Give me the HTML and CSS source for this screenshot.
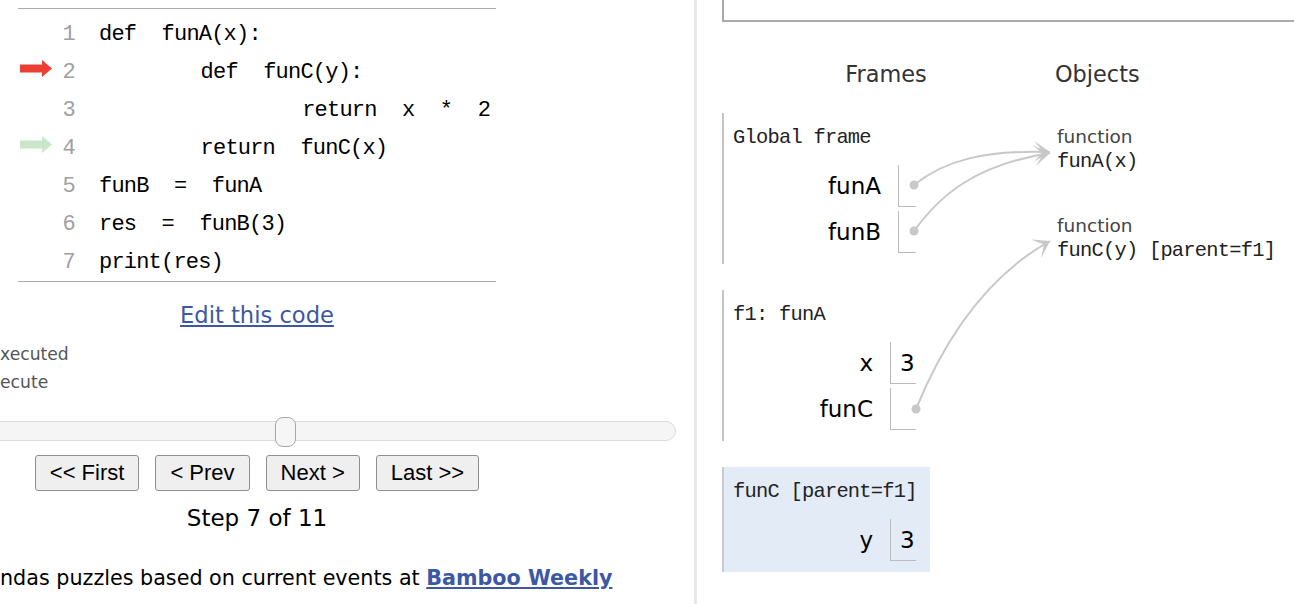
FILE: index.html
```html
<!DOCTYPE html>
<html lang="en">
<head>
<meta charset="utf-8">
<title>Python Tutor - Visualize code</title>
<link rel="stylesheet" href="styles.css">
</head>
<body>
<div class="page">
  <section class="left">
    <div class="code">
      <div class="row"><span class="arrow"></span><span class="ln">1</span><span class="src">def funA(x):</span></div>
      <div class="row"><span class="arrow"><svg class="arr" width="32" height="17" viewBox="0 0 32 17"><path d="M0 4.5h22V0l10 8.5-10 8.5v-4.5H0z" fill="#e93f34"/></svg></span><span class="ln">2</span><span class="src">    def funC(y):</span></div>
      <div class="row"><span class="arrow"></span><span class="ln">3</span><span class="src">        return x * 2</span></div>
      <div class="row"><span class="arrow"><svg class="arr" width="32" height="17" viewBox="0 0 32 17"><path d="M0 4.5h22V0l10 8.5-10 8.5v-4.5H0z" fill="#c9e6ca"/></svg></span><span class="ln">4</span><span class="src">    return funC(x)</span></div>
      <div class="row"><span class="arrow"></span><span class="ln">5</span><span class="src">funB = funA</span></div>
      <div class="row"><span class="arrow"></span><span class="ln">6</span><span class="src">res = funB(3)</span></div>
      <div class="row"><span class="arrow"></span><span class="ln">7</span><span class="src">print(res)</span></div>
    </div>
    <div class="edit"><a href="#">Edit this code</a></div>
    <div class="legend">
      <div>xecuted</div>
      <div>ecute</div>
    </div>
    <div class="slider"><div class="thumb"></div></div>
    <div class="nav">
      <button type="button">&lt;&lt; First</button>
      <button type="button">&lt; Prev</button>
      <button type="button">Next &gt;</button>
      <button type="button">Last &gt;&gt;</button>
    </div>
    <div class="step">Step 7 of 11</div>
    <div class="promo">ndas puzzles based on current events at <a href="#">Bamboo Weekly</a></div>
  </section>

  <section class="right">
    <div class="outbox"></div>
    <div class="viz">
      <div class="frames-col">
        <div class="hdr">Frames</div>
        <div class="frames">
          <div class="frame">
            <div class="ftitle">Global frame</div>
            <div class="vars">
              <div class="var"><span class="name">funA</span><span class="val"></span></div>
              <div class="var"><span class="name">funB</span><span class="val"></span></div>
            </div>
          </div>
          <div class="frame">
            <div class="ftitle">f1: funA</div>
            <div class="vars">
              <div class="var"><span class="name">x</span><span class="val wide">3</span></div>
              <div class="var"><span class="name">funC</span><span class="val wide"></span></div>
            </div>
          </div>
          <div class="frame hl">
            <div class="ftitle">funC [parent=f1]</div>
            <div class="vars">
              <div class="var"><span class="name">y</span><span class="val wide">3</span></div>
            </div>
          </div>
        </div>
      </div>
      <div class="objects-col">
        <div class="hdr">Objects</div>
        <div class="objects">
          <div class="obj">
            <div class="obj-type">function</div>
            <div class="obj-code">funA(x)</div>
          </div>
          <div class="obj">
            <div class="obj-type">function</div>
            <div class="obj-code">funC(y) [parent=f1]</div>
          </div>
        </div>
      </div>
    </div>
  </section>

  <svg class="links" width="1294" height="604" viewBox="0 0 1294 604">
    <defs>
      <marker id="head" markerUnits="userSpaceOnUse" markerWidth="18" markerHeight="24" viewBox="0 0 18 24" refX="16" refY="12" orient="auto">
        <path d="M0 1.5 L16 12 L0 22.5 L9 12 Z" fill="#c8c8c8"/>
      </marker>
    </defs>
    <g fill="none" stroke="#c8c8c8" stroke-width="2">
      <path d="M914 185 C945 160 985 150 1050 152" marker-end="url(#head)"/>
      <path d="M914 231 C940 195 975 165 1050 153" marker-end="url(#head)"/>
      <path d="M916 409 C940 350 980 280 1050 241" marker-end="url(#head)"/>
    </g>
    <g fill="#c8c8c8">
      <circle cx="914" cy="185" r="4.5"/>
      <circle cx="914" cy="231" r="4.5"/>
      <circle cx="916" cy="409" r="4.5"/>
    </g>
  </svg>
</div>
</body>
</html>
```

FILE: styles.css
```css
* { box-sizing: border-box; }

html, body {
  margin: 0;
  padding: 0;
  background: #fff;
  overflow: hidden;
}

body {
  width: 1294px;
  height: 604px;
}

.page {
  position: relative;
  display: flex;
  height: 604px;
  font-family: "DejaVu Sans", Verdana, sans-serif;
  color: #000;
}

/* ---------- left column ---------- */
.left {
  width: 697px;
  flex: none;
  overflow: hidden;
  border-right: 3px solid #e8e8e8;
}

.code {
  margin: 8px 0 0 18px;
  width: 478px;
  border-top: 1px solid #aaa;
  border-bottom: 1px solid #aaa;
  padding-top: 6px;
}

.row {
  display: grid;
  grid-template-columns: 37px 20px 1fr;
  height: 38px;
  align-items: center;
  font-family: "Liberation Mono", "Courier New", monospace;
  font-size: 22px;
  letter-spacing: -0.8px;
}

.arrow {
  display: flex;
  align-items: center;
  padding-left: 2px;
  height: 38px;
}

.arr {
  display: block;
  margin-bottom: 7px;
}

.ln {
  color: #a0a0a0;
  text-align: right;
}

.src {
  padding-left: 24px;
  white-space: pre;
  word-spacing: 13px;
  color: #000;
}

.edit {
  margin: 19px 0 0 18px;
  width: 478px;
  text-align: center;
  line-height: 28px;
  font-size: 22.6px;
}

.edit a,
.promo a {
  color: #3d58a2;
  text-decoration: underline;
}

.legend {
  margin-top: 11px;
  font-size: 17.2px;
  line-height: 28px;
  color: #555;
}

.slider {
  position: relative;
  margin: 25px 0 0 -10px;
  width: 686px;
  height: 20px;
  background: #f5f5f5;
  border: 1px solid #dcdcdc;
  border-radius: 10px;
}

.thumb {
  position: absolute;
  left: 284px;
  top: -5px;
  width: 21px;
  height: 30px;
  border: 1.5px solid #a8a8a8;
  border-radius: 8px;
  background: #f6f6f6;
}

.nav {
  margin: 14px 0 0 18px;
  width: 478px;
  display: flex;
  justify-content: center;
  gap: 16px;
}

.nav button {
  font-family: "Liberation Sans", Arial, sans-serif;
  font-size: 22px;
  height: 36px;
  padding: 0 14px;
  border: 1px solid #8f8f8f;
  border-radius: 3px;
  background: #efefef;
  color: #000;
}

.step {
  margin: 13px 0 0 18px;
  width: 478px;
  text-align: center;
  font-size: 23px;
  line-height: 28px;
}

.promo {
  margin-top: 32px;
  font-size: 20.7px;
  line-height: 28px;
  white-space: nowrap;
}

.promo a {
  font-weight: bold;
}

/* ---------- right column ---------- */
.right {
  flex: 1;
  padding-left: 25px;
  overflow: hidden;
}

.outbox {
  height: 22px;
  border-left: 2px solid #aaa;
  border-bottom: 2px solid #aaa;
  margin-right: -20px;
}

.viz {
  display: flex;
  margin-top: 38px;
}

.frames-col {
  width: 328px;
  flex: none;
}

.hdr {
  font-size: 22.4px;
  line-height: 28px;
  color: #333;
  text-align: center;
}

.objects-col .hdr {
  text-align: left;
  padding-left: 5px;
}

.frames {
  margin-top: 25px;
  display: flex;
  flex-direction: column;
  gap: 26px;
}

.frame {
  width: 208px;
  border-left: 2px solid #c4c4c4;
  padding: 13px 14px 11px 9px;
}

.frame.hl {
  background: #e2ebf6;
  border-left-color: #c3ccd8;
}

.ftitle,
.obj-code {
  font-family: "Liberation Mono", "Courier New", monospace;
  font-size: 20.4px;
  letter-spacing: -0.75px;
  white-space: pre;
  color: #222;
}

.ftitle {
  line-height: 24px;
}

.vars {
  margin-top: 15px;
  display: flex;
  flex-direction: column;
  gap: 4px;
}

.var {
  display: flex;
  height: 42px;
}

.name {
  flex: 1;
  align-self: center;
  text-align: right;
  padding-right: 17px;
  font-size: 23px;
}

.val {
  width: 18px;
  flex: none;
  display: flex;
  align-items: center;
  padding-left: 9px;
  font-size: 23px;
  border-left: 1px solid #bbb;
  border-bottom: 1px solid #bbb;
}

.val.wide {
  width: 26px;
}

.objects {
  margin-top: 37px;
  padding-left: 7px;
}

.obj + .obj {
  margin-top: 39px;
}

.obj-type {
  font-size: 18.5px;
  line-height: 24px;
  color: #444;
}

.obj-code {
  line-height: 26px;
}

/* connectors overlay */
.links {
  position: absolute;
  left: 0;
  top: 0;
  pointer-events: none;
}
```
